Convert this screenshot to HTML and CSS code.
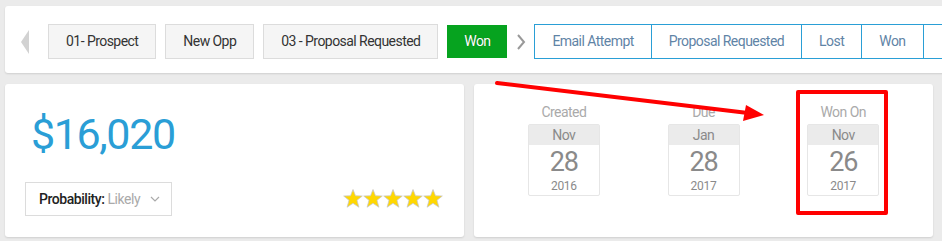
FILE: index.html
```
<html>
    <head>
        <link rel="stylesheet" href="styles.css">
    </head>
    <body>
        <div class="stagebar">
            <span class="nav-left"></span>
            <div class="stage">01- Prospect</div>
            <div class="stage">New Opp</div>
            <div class="stage">03 - Proposal Requested</div>
            <div class="stage current">Won</div>
            <span class="nav-right">
                <svg width="10" height="16" viewBox="0 0 10 16"><polyline points="2,1 8,8 2,15" fill="none" stroke="#999" stroke-width="2"/></svg>
            </span>
            <div class="outcomes">
                <div class="outcome">Email Attempt</div>
                <div class="outcome">Proposal Requested</div>
                <div class="outcome">Lost</div>
                <div class="outcome">Won</div>
                <div class="outcome blank"></div>
            </div>
        </div>

        <div class="row">
            <div class="card amount-card">
                <div class="amount">$16,020</div>
                <div class="amount-foot">
                    <div class="probability">
                        <span class="prob-label">Probability:</span>
                        <span class="prob-value">Likely</span>
                        <svg class="chev" width="10" height="6" viewBox="0 0 10 6"><polyline points="1,1 5,5 9,1" fill="none" stroke="#aaa" stroke-width="1.2"/></svg>
                    </div>
                    <div class="stars">
                        <svg width="100" height="20" viewBox="0 0 100 20">
                            <g fill="#ffd700" stroke="#c9c9c9" stroke-width="0.8" stroke-linejoin="round">
                                <polygon points="10,0.5 12.5,6.8 19.3,7 14,11.3 15.9,18.2 10,14.3 4.1,18.2 6,11.3 0.7,7 7.5,6.8"/>
                                <polygon transform="translate(20,0)" points="10,0.5 12.5,6.8 19.3,7 14,11.3 15.9,18.2 10,14.3 4.1,18.2 6,11.3 0.7,7 7.5,6.8"/>
                                <polygon transform="translate(40,0)" points="10,0.5 12.5,6.8 19.3,7 14,11.3 15.9,18.2 10,14.3 4.1,18.2 6,11.3 0.7,7 7.5,6.8"/>
                                <polygon transform="translate(60,0)" points="10,0.5 12.5,6.8 19.3,7 14,11.3 15.9,18.2 10,14.3 4.1,18.2 6,11.3 0.7,7 7.5,6.8"/>
                                <polygon transform="translate(80,0)" points="10,0.5 12.5,6.8 19.3,7 14,11.3 15.9,18.2 10,14.3 4.1,18.2 6,11.3 0.7,7 7.5,6.8"/>
                            </g>
                        </svg>
                    </div>
                </div>
            </div>

            <div class="card dates-card">
                <div class="date-col">
                    <div class="date-label">Created</div>
                    <div class="cal">
                        <div class="cal-month">Nov</div>
                        <div class="cal-day">28</div>
                        <div class="cal-year">2016</div>
                    </div>
                </div>
                <div class="date-col">
                    <div class="date-label">Due</div>
                    <div class="cal">
                        <div class="cal-month">Jan</div>
                        <div class="cal-day">28</div>
                        <div class="cal-year">2017</div>
                    </div>
                </div>
                <div class="date-col highlight">
                    <div class="date-label">Won On</div>
                    <div class="cal">
                        <div class="cal-month">Nov</div>
                        <div class="cal-day">26</div>
                        <div class="cal-year">2017</div>
                    </div>
                </div>
            </div>
        </div>

        <!-- annotation drawn over the screenshot -->
        <svg class="annotation" width="942" height="241" viewBox="0 0 942 241">
            <line x1="497" y1="83" x2="748" y2="113" stroke="#ff0000" stroke-width="4" stroke-linecap="round"/>
            <polygon points="746,105 764,115 743,121" fill="#ff0000"/>
        </svg>
    </body>
</html>
```

FILE: styles.css
```
body
{
    margin: 0;
    background: #ebebeb;
    font-family: Roboto, "Liberation Sans", sans-serif;
    font-size: 14px;
    letter-spacing: -0.55px;
    width: 942px;
    height: 241px;
    overflow: hidden;
    position: relative;
}

.stagebar
{
    display: flex;
    align-items: center;
    margin: 6px 0 0 5px;
    height: 67px;
    width: 1000px;
    background: #fff;
    border-radius: 3px;
    box-shadow: 0 1px 2px rgba(0,0,0,0.12);
    padding: 4px 0 0 16px;
    box-sizing: border-box;
}

.nav-left
{
    width: 0;
    height: 0;
    border-top: 12px solid transparent;
    border-bottom: 12px solid transparent;
    border-right: 8px solid #d2d2d2;
    margin-right: 19px;
    flex-shrink: 0;
}

.stage
{
    flex-shrink: 0;
    height: 35px;
    line-height: 33px;
    box-sizing: border-box;
    padding: 0 17px;
    background: #f5f5f5;
    border: 1px solid #dcdcdc;
    color: #333;
    margin-right: 9px;
}

.stage.current
{
    height: 33px;
    line-height: 33px;
    width: 60px;
    padding: 0;
    text-align: center;
    border: none;
    background: #06a31f;
    color: #fff;
    text-shadow: 0 0 1px rgba(0,0,0,0.35);
    margin-right: 9px;
}

.nav-right
{
    display: flex;
    flex-shrink: 0;
    margin-right: 8px;
}

.outcomes
{
    display: flex;
    flex-shrink: 0;
}

.outcome
{
    height: 35px;
    line-height: 33px;
    box-sizing: border-box;
    padding: 0 17px;
    border: 1px solid #2a9fd6;
    border-left: none;
    color: #5f84a6;
    white-space: nowrap;
}

.outcome:first-child
{
    border-left: 1px solid #2a9fd6;
}

.outcome.blank
{
    width: 40px;
}

.row
{
    display: flex;
    gap: 10px;
    margin: 11px 0 0 5px;
}

.card
{
    background: #fff;
    width: 459px;
    height: 153px;
    box-sizing: border-box;
    border-radius: 3px;
    box-shadow: 0 1px 2px rgba(0,0,0,0.12);
}

.amount-card
{
    padding: 28px 20px 0 20px;
}

.amount
{
    font-size: 43px;
    line-height: 45px;
    letter-spacing: -1.4px;
    color: #2a9ed6;
    padding-left: 6px;
}

.amount-foot
{
    display: flex;
    justify-content: space-between;
    align-items: center;
    margin-top: 25px;
}

.probability
{
    display: flex;
    align-items: center;
    height: 34px;
    width: 147px;
    box-sizing: border-box;
    border: 1px solid #dcdcdc;
    padding-left: 13px;
    letter-spacing: -0.45px;
}

.prob-label
{
    color: #222;
    font-weight: 500;
}

.prob-value
{
    color: #aaa;
    margin-left: 3px;
}

.chev
{
    margin-left: 10px;
}

.stars
{
    display: flex;
    margin-right: 1px;
}

.dates-card
{
    display: flex;
    padding: 19px 20px 0 20px;
}

.date-col
{
    flex: 1;
    display: flex;
    flex-direction: column;
    align-items: center;
    position: relative;
}

.date-label
{
    color: #aaa;
    font-size: 14px;
    line-height: 18px;
    margin-bottom: 3px;
}

.cal
{
    width: 72px;
    height: 72px;
    box-sizing: border-box;
    border: 1px solid #e6e6e6;
    border-radius: 2px;
    text-align: center;
    color: #8a8a8a;
}

.cal-month
{
    background: #ebebeb;
    height: 20px;
    line-height: 20px;
    font-size: 14px;
}

.cal-day
{
    font-size: 27px;
    line-height: 34px;
    letter-spacing: -1.2px;
}

.cal-year
{
    font-size: 12px;
    line-height: 14px;
    letter-spacing: -0.3px;
}

.highlight::after
{
    content: "";
    position: absolute;
    left: 23px;
    top: -13px;
    width: 92px;
    height: 125px;
    box-sizing: border-box;
    border: 4px solid #ff0000;
    border-radius: 2px;
}

.annotation
{
    position: absolute;
    left: 0;
    top: 0;
}
```
